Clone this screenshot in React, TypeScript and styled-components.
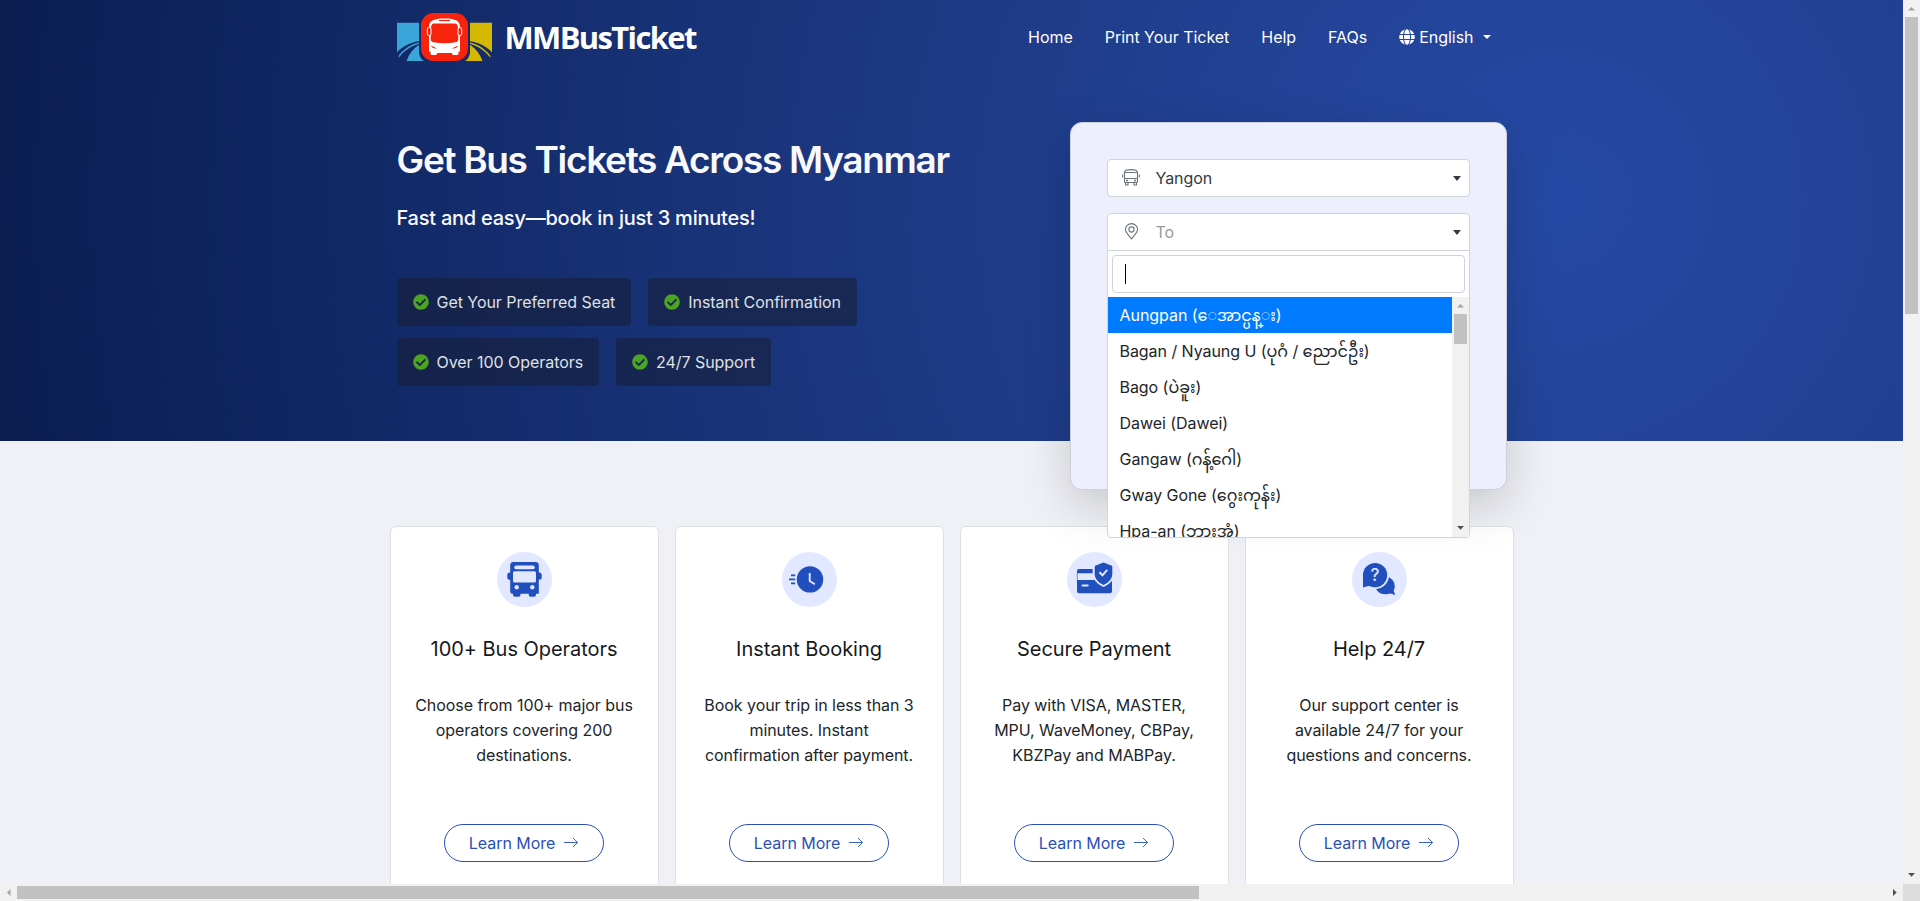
import React from "react";
import styled, { createGlobalStyle } from "styled-components";
import { FaCheckCircle, FaGlobe } from "react-icons/fa";

const GlobalStyle = createGlobalStyle`
  * { box-sizing: border-box; }
  html, body { margin: 0; padding: 0; overflow: hidden; }
  body {
    font-family: Inter, "Noto Sans Myanmar", "Noto Sans", sans-serif;
    font-size: 16px;
    line-height: 1.5;
    letter-spacing: -0.05px;
    color: #212529;
  }
  h1, h2, h3, p, ul { margin: 0; padding: 0; font-weight: inherit; }
  svg { display: block; flex: none; }
`;

const Window = styled.div`
  display: grid;
  grid-template-columns: 1fr 17px;
  grid-template-rows: 1fr 17px;
  width: 1920px;
  height: 901px;
`;

const Viewport = styled.div`
  overflow: hidden;
  background: #f0f1f6;
`;

const Hero = styled.section`
  height: 441px;
  background: radial-gradient(circle at 1560px 200px, #254aa5 0, #1e3a86 620px, #0a1e52 1560px);
`;

const Container = styled.div`
  width: 1140px;
  margin: 0 auto;
  padding: 0 15px;
`;

const Header = styled.header`
  display: flex;
  align-items: center;
  justify-content: space-between;
  height: 74px;
`;

const Brand = styled.a`
  display: flex;
  align-items: center;
  gap: 13px;
  color: #fff;
  font: 700 31px/40px "Open Sans", sans-serif;
  letter-spacing: -1.65px;
`;

const Nav = styled.nav`
  display: flex;
  align-items: center;
  gap: 32px;
  padding-right: 16px;
  color: #fff;
  font-weight: 400;
  letter-spacing: -0.03px;
`;

const Language = styled.span`
  display: flex;
  align-items: center;
  gap: 4px;
`;

const Caret = styled.span<{ $height?: number; $color?: string }>`
  flex: none;
  border: 4px solid transparent;
  border-top: ${(p) => p.$height ?? 4}px solid ${(p) => p.$color ?? "#fff"};
  border-bottom: 0;
`;

const NavCaret = styled(Caret)`
  margin-left: 5px;
`;

const HeroBody = styled.div`
  display: flex;
  justify-content: space-between;
  align-items: flex-start;
  padding-top: 48px;
`;

const Pitch = styled.div`
  width: 600px;
  padding-top: 15px;
`;

const Headline = styled.h1`
  color: #f8f9fc;
  font-size: 37px;
  font-weight: 600;
  line-height: 46px;
  letter-spacing: -1.33px;
  white-space: nowrap;
`;

const Tagline = styled.p`
  margin-top: 20px;
  color: #f8f9fc;
  font-size: 20px;
  font-weight: 500;
  line-height: 30px;
  letter-spacing: -0.24px;
`;

const Perks = styled.ul`
  display: flex;
  flex-wrap: wrap;
  gap: 12px 17px;
  width: 480px;
  margin-top: 45px;
  list-style: none;
`;

const Perk = styled.li`
  display: flex;
  align-items: center;
  gap: 8px;
  height: 48px;
  padding: 0 16px;
  border-radius: 4px;
  background: rgba(24, 32, 56, 0.6);
  color: #dee0e4;
  white-space: nowrap;
  svg { color: #4ca522; }
`;

const SearchCard = styled.div`
  position: relative;
  z-index: 2;
  display: flex;
  flex-direction: column;
  gap: 16px;
  width: 437px;
  height: 368px;
  padding: 36px;
  border: 1px solid #cdd0da;
  border-radius: 12px;
  background: #edeffc;
  box-shadow: 0 16px 48px rgba(0, 0, 0, 0.175);
`;

const SelectBox = styled.div<{ $open?: boolean; $muted?: boolean }>`
  position: relative;
  display: flex;
  align-items: center;
  height: 38px;
  padding: 0 8px 0 14px;
  border: 1px solid #ced4da;
  border-radius: ${(p) => (p.$open ? "4px 4px 0 0" : "4px")};
  background: #fff;
  color: ${(p) => (p.$muted ? "#939ba2" : "#343a40")};
`;

const SelectText = styled.span`
  flex: 1;
  margin-left: 16px;
`;

const Dropdown = styled.div`
  position: absolute;
  top: 100%;
  left: -1px;
  right: -1px;
  height: 288px;
  border: 1px solid #ced4da;
  border-radius: 0 0 4px 4px;
  background: #fff;
  color: #212529;
  overflow: hidden;
`;

const SearchField = styled.div`
  display: flex;
  align-items: center;
  height: 38px;
  margin: 4px;
  padding-left: 12px;
  border: 1px solid #ced4da;
  border-radius: 4px;
`;

const TextCursor = styled.span`
  width: 1px;
  height: 20px;
  background: #000;
`;

const ListArea = styled.div`
  display: grid;
  grid-template-columns: 1fr 17px;
  height: 240px;
`;

const Options = styled.div`
  overflow: hidden;
`;

const Option = styled.div<{ $active?: boolean }>`
  height: 36px;
  padding-left: 12px;
  line-height: 36px;
  white-space: nowrap;
  background: ${(p) => (p.$active ? "#007bff" : "transparent")};
  color: ${(p) => (p.$active ? "#fff" : "#212529")};
`;

const Track = styled.div<{ $horizontal?: boolean }>`
  display: flex;
  flex-direction: ${(p) => (p.$horizontal ? "row" : "column")};
  align-items: center;
  background: #f1f1f1;
`;

const Thumb = styled.div<{ $length: number; $horizontal?: boolean }>`
  width: ${(p) => (p.$horizontal ? p.$length : 13)}px;
  height: ${(p) => (p.$horizontal ? 13 : p.$length)}px;
  background: #c1c1c1;
`;

const ArrowCell = styled.span<{ $end?: boolean }>`
  display: flex;
  align-items: center;
  justify-content: center;
  width: 17px;
  height: 17px;
  flex: none;
  margin: ${(p) => (p.$end ? "auto 0 0 auto" : "0")};
`;

const Corner = styled.div`
  background: #dcdcdc;
`;

const Features = styled.section`
  display: flex;
  gap: 16px;
  width: 1124px;
  margin: 85px auto 0;
`;

const FeatureCard = styled.article`
  display: flex;
  flex-direction: column;
  align-items: center;
  width: 269px;
  height: 380px;
  padding: 25px 20px;
  border: 1px solid #dfe0e3;
  border-radius: 6px;
  background: #fff;
  text-align: center;
`;

const FeatureTitle = styled.h3`
  margin-top: 27px;
  color: #16191c;
  font-size: 20px;
  font-weight: 400;
  line-height: 30px;
  letter-spacing: -0.05px;
`;

const FeatureText = styled.p`
  width: 218px;
  height: 75px;
  margin-top: 29px;
  line-height: 25px;
`;

const LearnMore = styled.a`
  display: flex;
  align-items: center;
  justify-content: center;
  gap: 8px;
  width: 160px;
  height: 38px;
  margin-top: 56px;
  border: 1px solid #2850b8;
  border-radius: 19px;
  color: #2850b8;
`;

const BLUE = "#214fbe";
const PALE = "#e2e8ff";

const Logo = () => (
  <svg width="95" height="48" viewBox="0 0 95 48">
    <path d="M0 9.7H22V28.3C13 29.5 5 34 0 39.2Z" fill="#3aa5d8" />
    <path d="M2 44.5C7 37.5 14 33 22 30.7V29.6C12 32 5.500 37.500 1.500 43Z" fill="#3aa5d8" />
    <path d="M9.500 48C12 41 16 35.500 22 31.700V40C22.500 44 25 47 27 48Z" fill="#3aa5d8" />
    <path d="M95 9.700H73V28.300C82 29.500 90 34 95 39.200Z" fill="#d4b900" />
    <path d="M93 44.500C88 37.500 81 33 73 30.700V29.600C83 32 89.500 37.500 93.500 43Z" fill="#d4b900" />
    <path d="M85.500 48C83 41 79 35.500 73 31.700V40C72.500 44 70 47 68 48Z" fill="#d4b900" />
    <rect x="24" y="0" width="47" height="48" rx="12.500" fill="#f7230c" />
    <path d="M32 14C32 8 36 5.400 47.500 5.400S63 8 63 14V38.500H61.500V40.500Q61.500 42 60 42H56.500Q55 42 54.800 40H40.200Q40 42 38.500 42H35Q33.500 42 33.500 40.500V38.500H32Z" fill="#fff" />
    <path d="M37 10.500H58Q60.500 10.500 60.900 14L61.300 26Q61.300 29 58.500 29.300Q47.500 31 36.500 29.300Q33.700 29 33.700 26L34.100 14Q34.500 10.500 37 10.500Z" fill="#f7230c" />
    <path d="M42 7.500H53" stroke="#f7230c" strokeWidth="1.200" />
    <path d="M34 32.500L40 35.500Q35 36 34 32.500ZM61 32.500L55 35.500Q60 36 61 32.500Z" fill="#f7230c" />
    <rect x="30.300" y="14.500" width="3.700" height="8" rx="1.700" fill="#f7230c" stroke="#fff" />
    <rect x="61" y="14.500" width="3.700" height="8" rx="1.700" fill="#f7230c" stroke="#fff" />
  </svg>
);

const BusOutline = () => (
  <svg width="18" height="18" viewBox="0 0 18 18" fill="none" stroke="#6c757d" strokeWidth="1.100">
    <path d="M2.500 12.500V3.500Q2.500 .6 9 .6T15.500 3.500V12.500Q15.500 13.500 14.500 13.500H3.500Q2.500 13.500 2.500 12.500Z" />
    <path d="M2.500 3.500H15.500M2.500 9.500H15.500M.7 5.500V8.500M17.300 5.500V8.500M3.500 13.500V16H6V13.500M12 13.500V16H14.500V13.500" />
    <circle cx="5" cy="11.500" r=".45" />
    <circle cx="13" cy="11.500" r=".45" />
  </svg>
);

const PinOutline = () => (
  <svg width="18" height="18" viewBox="0 0 18 18" fill="none" stroke="#6c757d" strokeWidth="1.100">
    <path d="M9.500 15.800C8 13.800 3.400 9.500 3.400 6.500A6.100 5.900 0 0 1 15.600 6.500C15.600 9.500 11 13.800 9.500 15.800Z" />
    <circle cx="9.500" cy="6.500" r="2.600" />
  </svg>
);

const ArrowRight = () => (
  <svg width="16" height="16" viewBox="0 0 16 16" fill="none" stroke={BLUE} strokeWidth="0.900">
    <path d="M1 7.500H14.500M10 3L14.600 7.500L10 12" />
  </svg>
);

const BusIcon = () => (
  <svg width="55" height="55" viewBox="0 0 55 55">
    <circle cx="27.500" cy="27.500" r="27.500" fill={PALE} />
    <rect x="10.300" y="20.500" width="34.400" height="7.300" rx="2.500" fill={BLUE} />
    <path d="M16.500 10H38.500Q41.800 10 41.800 13.300V41.700H39V42.700Q39 44.700 37 44.700H33.700Q31.700 44.700 31.700 42.700V41.700H23.500V42.700Q23.500 44.700 21.500 44.700H18Q16 44.700 16 42.700V41.700H15.200Q13.200 41.700 13.200 39.700V13.300Q13.200 10 16.500 10Z" fill={BLUE} />
    <rect x="17.300" y="13.500" width="20.400" height="3.800" rx="1.900" fill={PALE} />
    <rect x="16" y="19.200" width="23" height="11.200" rx="1.500" fill={PALE} />
    <circle cx="19.700" cy="35.300" r="2.200" fill={PALE} />
    <circle cx="35.300" cy="35.300" r="2.200" fill={PALE} />
  </svg>
);

const ClockIcon = () => (
  <svg width="55" height="55" viewBox="0 0 55 55">
    <circle cx="27.500" cy="27.500" r="27.500" fill={PALE} />
    <circle cx="28" cy="27.400" r="13.200" fill={BLUE} />
    <path d="M27.700 21V29L32.800 32.200" fill="none" stroke={PALE} strokeWidth="1.900" />
    <path d="M9 23.400H13.200M7 27.400H13.200M9 31.400H13.200" stroke={BLUE} strokeWidth="1.800" />
  </svg>
);

const PaymentIcon = () => (
  <svg width="55" height="55" viewBox="0 0 55 55">
    <circle cx="27.500" cy="27.500" r="27.500" fill={PALE} />
    <path d="M10 21.200V19Q10 17 12 17H25.700V21.200Z" fill={BLUE} />
    <path d="M10.300 21V29" stroke={BLUE} strokeWidth="0.600" />
    <path d="M10 28H45V39.300Q45 41.300 43 41.300H12Q10 41.300 10 39.300Z" fill={BLUE} />
    <path d="M15.500 33.400H20.700" stroke={PALE} strokeWidth="2" strokeLinecap="round" />
    <path d="M36.500 10.600L45.300 14V22Q45.300 29 36.500 33Q27.700 29 27.700 22V14Z" fill={BLUE} stroke={PALE} strokeWidth="3.600" strokeLinejoin="round" />
    <path d="M36.500 10.600L44.300 13.400Q45.300 13.800 45.300 15V22Q45.300 29 36.500 33Q27.700 29 27.700 22V15Q27.700 13.800 28.700 13.400Z" fill={BLUE} />
    <path d="M32.500 20.200L35.500 23.300L40.200 17.800" fill="none" stroke={PALE} strokeWidth="2" />
  </svg>
);

const Question = styled.text`
  font: 500 17px Inter, sans-serif;
  fill: #e2e8ff;
  text-anchor: middle;
`;

const HelpIcon = () => (
  <svg width="55" height="55" viewBox="0 0 55 55">
    <circle cx="27.500" cy="27.500" r="27.500" fill={PALE} />
    <path d="M34 24Q43 27 42.800 34.500Q42.700 36.500 41.600 38.500L43.200 42.900L38.500 41.600Q28 44.500 23.700 36.500Z" fill={BLUE} />
    <circle cx="23.100" cy="23.100" r="14" fill={PALE} />
    <circle cx="23.100" cy="23.100" r="12.100" fill={BLUE} />
    <path d="M11 23V35.500L18 33.500L23 35.200L19 18Z" fill={BLUE} />
    <Question x="23" y="29">?</Question>
  </svg>
);

const perks = ["Get Your Preferred Seat", "Instant Confirmation", "Over 100 Operators", "24/7 Support"];

const cities = [
  "Aungpan (ေအာင္ပန္း)",
  "Bagan / Nyaung U (ပုဂံ / ညောင်ဦး)",
  "Bago (ပဲခူး)",
  "Dawei (Dawei)",
  "Gangaw (ဂန့်ဂေါ)",
  "Gway Gone (ဂွေးကုန်း)",
  "Hpa-an (ဘားအံ)",
];

const features = [
  { icon: <BusIcon />, title: "100+ Bus Operators", text: "Choose from 100+ major bus operators covering 200 destinations." },
  { icon: <ClockIcon />, title: "Instant Booking", text: "Book your trip in less than 3 minutes. Instant confirmation after payment." },
  { icon: <PaymentIcon />, title: "Secure Payment", text: "Pay with VISA, MASTER, MPU, WaveMoney, CBPay, KBZPay and MABPay." },
  { icon: <HelpIcon />, title: "Help 24/7", text: "Our support center is available 24/7 for your questions and concerns." },
];

const arrows = {
  up: "M5 10.500L8.500 7L12 10.500Z",
  down: "M5 6L8.500 9.700L12 6Z",
  left: "M10.500 5L7 8.500L10.500 12Z",
  right: "M7 5L10.700 8.500L7 12Z",
};

const Arrow = ({ dir, end, dim }: { dir: keyof typeof arrows; end?: boolean; dim?: boolean }) => (
  <ArrowCell $end={end}>
    <svg width="17" height="17" viewBox="0 0 17 17">
      <path d={arrows[dir]} fill={dim ? "#a3a3a3" : "#505050"} />
    </svg>
  </ArrowCell>
);

export default function App() {
  return (
    <Window>
      <GlobalStyle />
      <Viewport>
        <Hero>
          <Container>
            <Header>
              <Brand>
                <Logo />
                MMBusTicket
              </Brand>
              <Nav>
                <span>Home</span>
                <span>Print Your Ticket</span>
                <span>Help</span>
                <span>FAQs</span>
                <Language>
                  <FaGlobe size={16} />
                  English
                  <NavCaret />
                </Language>
              </Nav>
            </Header>
            <HeroBody>
              <Pitch>
                <Headline>Get Bus Tickets Across Myanmar</Headline>
                <Tagline>Fast and easy—book in just 3 minutes!</Tagline>
                <Perks>
                  {perks.map((perk) => (
                    <Perk key={perk}>
                      <FaCheckCircle size={16} />
                      {perk}
                    </Perk>
                  ))}
                </Perks>
              </Pitch>
              <SearchCard>
                <SelectBox>
                  <BusOutline />
                  <SelectText>Yangon</SelectText>
                  <Caret $height={5} $color="#343a40" />
                </SelectBox>
                <SelectBox $open $muted>
                  <PinOutline />
                  <SelectText>To</SelectText>
                  <Caret $height={5} $color="#343a40" />
                  <Dropdown>
                    <SearchField>
                      <TextCursor />
                    </SearchField>
                    <ListArea>
                      <Options>
                        {cities.map((city, i) => (
                          <Option key={city} $active={i === 0}>
                            {city}
                          </Option>
                        ))}
                      </Options>
                      <Track>
                        <Arrow dir="up" dim />
                        <Thumb $length={30} />
                        <Arrow dir="down" end />
                      </Track>
                    </ListArea>
                  </Dropdown>
                </SelectBox>
              </SearchCard>
            </HeroBody>
          </Container>
        </Hero>
        <Features>
          {features.map((f) => (
            <FeatureCard key={f.title}>
              {f.icon}
              <FeatureTitle>{f.title}</FeatureTitle>
              <FeatureText>{f.text}</FeatureText>
              <LearnMore>
                Learn More
                <ArrowRight />
              </LearnMore>
            </FeatureCard>
          ))}
        </Features>
      </Viewport>
      <Track>
        <Arrow dir="up" dim />
        <Thumb $length={297} />
        <Arrow dir="down" end />
      </Track>
      <Track $horizontal>
        <Arrow dir="left" dim />
        <Thumb $length={1182} $horizontal />
        <Arrow dir="right" end />
      </Track>
      <Corner />
    </Window>
  );
}
